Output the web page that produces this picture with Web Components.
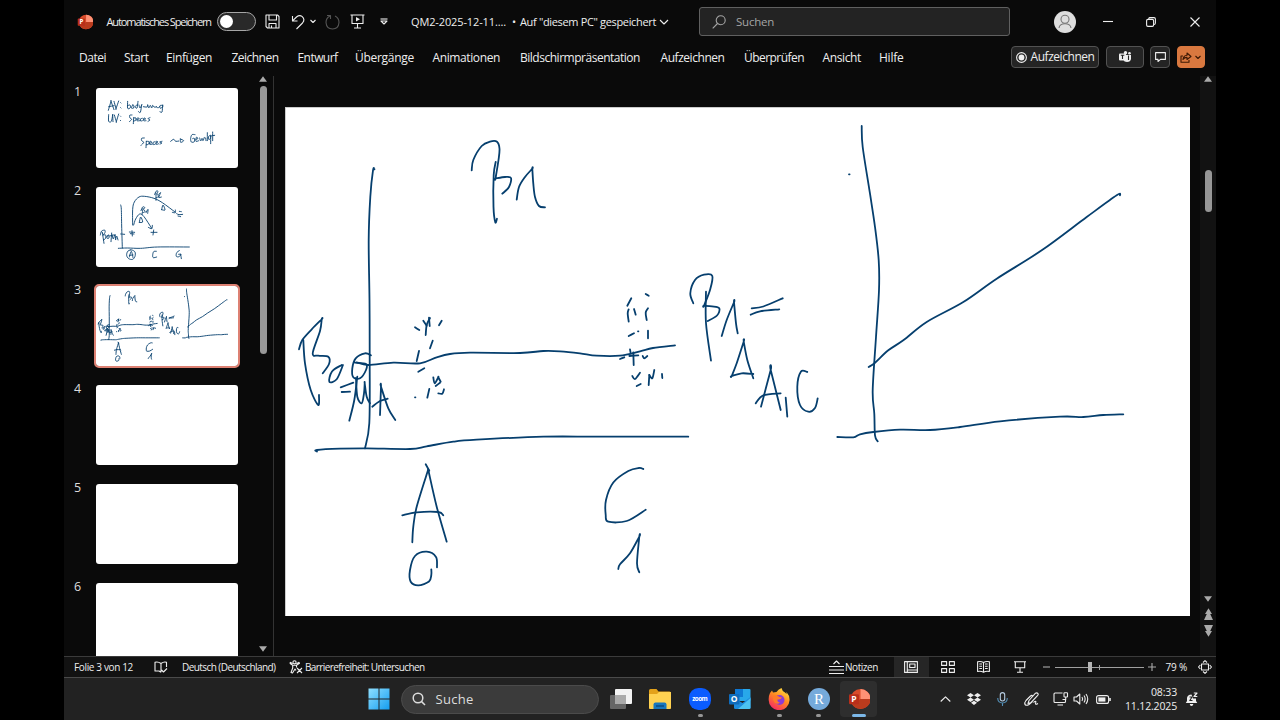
<!DOCTYPE html>
<html lang="de">
<head>
<meta charset="utf-8">
<title>QM2-2025-12-11</title>
<style>
  html, body { margin: 0; height: 100%; background: #000; overflow: hidden; }
  body {
    display: flex;
    justify-content: center;
    font-family: "Open Sans", "Noto Sans", sans-serif;
    color: #eee;
  }
</style>
</head>
<body>
<desktop-screen>
  <title-bar slot="window"></title-bar>
  <ribbon-tabs slot="window"></ribbon-tabs>
  <work-area slot="window"></work-area>
  <status-bar slot="window"></status-bar>
  <task-bar slot="taskbar"></task-bar>
</desktop-screen>

<script>
function define(name, html, setup) {
  const template = document.createElement('template');
  template.innerHTML = html.trim();
  customElements.define(name, class extends HTMLElement {
    constructor() {
      super();
      this.attachShadow({ mode: 'open' });
    }
    connectedCallback() {
      if (this.shadowRoot.firstChild) return;
      this.shadowRoot.appendChild(template.content.cloneNode(true));
      if (setup) setup(this, this.shadowRoot);
    }
  });
}

// shared by every horizontal bar: items keep their size, --g is the space before one
const row = `
  :host { display: flex; align-items: center; box-sizing: border-box; flex: none; }
  * { flex: none; }
  fit-text, ui-icon, app-icon, .item { margin-left: var(--g, 0); }
  .item > * { --g: 0px; }
`;

// a label set to a given width with letter-spacing
define('fit-text', `
<style>
  :host { display: block; line-height: 16px; }
  span { display: inline-block; white-space: pre; }
</style><span><slot></slot></span>`, (el, root) => {
  const w = Number(el.getAttribute('w'));
  const span = root.querySelector('span');
  const natural = span.getBoundingClientRect().width;
  span.style.letterSpacing = ((w - natural) / el.textContent.length).toFixed(3) + 'px';
  el.style.width = w + 'px';
});

const icons = {
  save: [15, 15, '<path d="M1 1H12.5L14 2.5V14H2.5L1 12.5ZM4 1V6H11.500V1M4 14V9.500H11V14M6.500 14V11.500"/>'],
  undo: [15, 16, '<path d="M1.500 2V7H6.500M1.800 6.700L5.500 3Q8.500 .7 11 2.400Q14.500 5.500 11.500 9L5.500 15"/>'],
  chev: [8, 5, '<path d="M1.500 1L4 3.500L6.500 1"/>'],
  redo: [15, 16, '<path d="M2 1.500H5.500V5M5 2Q1 4 1 8.500Q1.500 15 7.500 15Q13.500 15 14 8.500Q14 4 10 2"/>'],
  show: [15, 15, '<path d="M.5 1H14.500M2 1V9.500H13V1M7.500 9.500V14M4 14H11"/><path d="M6 3L10 5.200L6 7.500Z" fill="currentColor" stroke="none"/>'],
  more: [8, 7, '<path d="M.5 1H7.500"/><path d="M1 3H7L4 6Z"/>'],
  chevBig: [10, 6, '<path d="M1 1L5 5L9 1"/>'],
  lens: [14, 14, '<circle cx="8.700" cy="5.300" r="4.500"/><path d="M5.500 8.500L.7 13.300"/>'],
  user: [24, 24, '<circle cx="12" cy="12" r="11" fill="#dedede" stroke="none"/><g stroke="#777"><circle cx="12" cy="9.200" r="4"/><path d="M6 18Q6.500 13.800 12 13.800Q17.500 13.800 18 18"/></g>'],
  min: [10, 10, '<path d="M0 4.500H10"/>'],
  restore: [10, 10, '<rect x=".6" y="2.400" width="7" height="7" rx="1.300"/><path d="M2.800 2V1.500Q3 .6 4 .6H8Q9.400 .7 9.400 2V6Q9.300 7.400 8 7.500"/>'],
  close: [10, 10, '<path d="M.5 .5L9.500 9.500M9.500 .5L.5 9.500"/>'],
  record: [11, 11, '<circle cx="5.500" cy="5.500" r="4.900"/><circle cx="5.500" cy="5.500" r="2.900" fill="currentColor" stroke="none"/>'],
  teams: [13, 12, '<g fill="currentColor" stroke="none"><circle cx="6.500" cy="1.700" r="1.700"/><circle cx="10.500" cy="2.300" r="1.300"/><path d="M5 4H12V8Q11.500 11 8 11Q5 10.800 4.500 9Z"/><rect x="0" y="2.500" width="7" height="7" rx="1"/></g><path d="M1.800 4.300H5.300M3.500 4.300V8M9.500 4.500V9" stroke="#222"/>'],
  comment: [11, 10, '<path d="M.6 .6H10.400V7.400H5.500L3 9.500V7.400H.6Z"/>'],
  share: [12, 11, '<path d="M3 4H1V10.300H9V8M3 7.500Q3.500 3.500 7 3.300V1L11 4.500L7 7.500V5.400Q4.500 5.300 3 7.500Z"/>'],
  up: [8, 6, '<path d="M4 .3L8 5.700H0Z" fill="currentColor" stroke="none"/>'],
  down: [8, 6, '<path d="M4 5.700L8 .3H0Z" fill="currentColor" stroke="none"/>'],
  up2: [9, 13, '<path d="M4.500 .3L8 6H6.200L9 12H0L2.800 6H1Z" fill="currentColor" stroke="none"/>'],
  down2: [9, 13, '<path d="M4.500 12.700L8 7H6.200L9 1H0L2.800 7H1Z" fill="currentColor" stroke="none"/>'],
  proof: [14, 12, '<path d="M7 2.500Q4 .3 1 1.300V10H5L7 11.300M7 2.500Q10 .3 12.500 1.300V6M7 2.500V11.300M7.500 9L9.500 11L13 7.500"/>'],
  access: [14, 14, '<circle cx="5.500" cy="2.300" r="1.600"/><path d="M.8 3.200L3.700 5.200V8L2 12.500L3.500 13L6 9L7 10.500M3.700 5.200H7.500L10.500 3.200L9.800 2.400L7.300 3.700M.8 3.200L1.600 2.400L3.700 3.700M7.500 5.200V7.500M8 8L13 13M13 8L8 13"/>'],
  notes: [15, 15, '<path d="M4.500 4L7.500 1L10.500 4M0 6.500H15M0 10H15M0 13.500H15"/>'],
  normal: [14, 12, '<path d="M.6 .6H13.400V11.400H.6ZM3.300 .6V11.400M5.700 3H11V6.500H5.700ZM3.300 9H13.400"/>'],
  grid: [14, 12, '<path d="M.6 .6H5.600V4.400H.6ZM8.400 .6H13.400V4.400H8.400ZM.6 7.600H5.600V11.400H.6ZM8.400 7.600H13.400V11.400H8.400Z"/>'],
  reading: [13, 12, '<path d="M6.500 1.500Q4 0 .6 .8V10.500Q4 9.800 6.500 11.200Q9 9.800 12.400 10.500V.8Q9 0 6.500 1.500V11.200M2.300 3H5M2.300 5.200H5M2.300 7.500H5M8 3H10.700M8 5.200H10.700M8 7.500H10.700"/>'],
  slides: [12, 12, '<path d="M0 .8H12M1.300 .8V6.800H10.700V.8M6 6.800V11.300M3 11.300H9"/>'],
  minus: [7, 8, '<path d="M0 4H7"/>'],
  plus: [8, 8, '<path d="M0 4H8M4 0V8"/>'],
  fit: [14, 14, '<rect x="3.500" y="4" width="7" height="6"/><path d="M5 2.500L7 .6L9 2.500M5 11.500L7 13.400L9 11.500M2.300 5L.5 7L2.300 9M11.700 5L13.500 7L11.700 9"/>'],
  search: [14, 14, '<g stroke-width="1.500"><circle cx="6" cy="6" r="4.800"/><path d="M9.600 9.600L13 13"/></g>'],
  caret: [11, 6, '<path d="M.7 5.500L5.500 .8L10.300 5.500"/>'],
  dropbox: [14, 12, '<path d="M3.500 0L7 2.200L3.500 4.400L0 2.200ZM10.500 0L14 2.200L10.500 4.400L7 2.200ZM3.500 4.600L7 6.800L3.500 9L0 6.800ZM10.500 4.600L14 6.800L10.500 9L7 6.800ZM7 7.800L10 9.800L7 12L4 9.800Z" fill="currentColor" stroke="none"/>'],
  mic: [11, 14, '<rect x="3.300" y=".6" width="4.400" height="8.400" rx="2.200" stroke="#b5cbe0"/><path d="M.8 6V7Q1.300 10.800 5.500 11Q9.700 10.800 10.200 7V6M5.500 11V14" stroke="#5490b8"/>'],
  pen: [15, 14, '<path d="M5 8.500L11.500 1.200Q13 .3 14 1.600Q14.700 2.700 13.500 3.700L7 10.500L4 11.500ZM8.500 4.500Q8.300 2.500 6.500 4L2 8.500Q.3 10.500 1 12.500Q2.500 14 5 12.500L8.500 9.500M9.500 10.500Q12.500 8 11.700 10.500Q10.500 13.500 14 11.500"/>'],
  network: [15, 14, '<path d="M9.500 1H2Q1 1 1 2V9.500Q1 10.500 2 10.500H11.500Q12.500 10.500 12.500 9.500V7M4.500 13H10"/><rect x="11" y=".7" width="3.500" height="4.300" rx=".6"/><path d="M12.700 5V7.500H9.500"/>'],
  sound: [16, 12, '<path d="M1 4H3.500L6.800 1V11L3.500 8H1ZM9 4Q10.300 6 9 8M11 2.500Q13.300 6 11 9.500M13 1Q16.500 6 13 11"/>'],
  battery: [15, 9, '<rect x=".6" y=".6" width="12" height="7.800" rx="2"/><rect x="2.400" y="2.400" width="7" height="4.200" fill="currentColor" stroke="none"/><path d="M14 3V6" stroke-width="1.600"/>'],
  bell: [13, 15, '<path d="M.8 11L2 9V6Q2.500 2.500 6.500 2.500L8 6.500H11V9L12.300 11ZM4.700 12H8.400Q8 14 6.500 14Q5 14 4.700 12Z" fill="currentColor" stroke="none"/><path d="M8.800 1H12L9 4.500H12.300" stroke-width="1.200"/><path d="M4.500 5H7L4.800 8.500H7.500" stroke="#222"/>'],
};

define('ui-icon', `
<style>
  :host { display: block; line-height: 0; }
  svg { display: block; fill: none; stroke: currentColor; stroke-width: 1.100; stroke-linejoin: round; overflow: visible; }
</style>
<svg></svg>`, (el, root) => {
  const [w, h, body] = icons[el.getAttribute('name')];
  const svg = root.querySelector('svg');
  svg.setAttribute('viewBox', `0 0 ${w} ${h}`);
  svg.setAttribute('width', w);
  svg.setAttribute('height', h);
  svg.innerHTML = body;
});

const powerpoint = `
  <circle cx="12.500" cy="11" r="10" fill="#d84c2b"/>
  <path d="M12.500 1A10 10 0 0 1 22.500 11H12.500Z" fill="#ff9275"/>
  <path d="M22.500 11A10 10 0 0 1 4 16L12.500 11Z" fill="#ba3b1d"/>
  <rect x="1" y="6.300" width="10" height="10" rx="1.200" fill="#b92f1a"/>
  <text x="6" y="14.300" font-size="8.500" font-weight="700" text-anchor="middle" fill="#fff">P</text>`;

const apps = {
  powerpoint,
  windows: `
    <defs><linearGradient id="w" x2="1" y2="1"><stop stop-color="#8fe0ff"/><stop offset="1" stop-color="#149df0"/></linearGradient></defs>
    <path d="M.5 .5H10.500V10.500H.5ZM11.500 .5H21.500V10.500H11.500ZM.5 11.500H10.500V21.500H.5ZM11.500 11.500H21.500V21.500H11.500Z" fill="url(#w)"/>`,
  taskview: `
    <rect x="0" y="7" width="16" height="14" rx="1" fill="#666"/>
    <rect x="5" y="1" width="17" height="15" rx="1" fill="#f2f2f2"/>
    <rect x="5" y="7" width="11" height="9" fill="#aaa"/>`,
  explorer: `
    <path d="M0 2.500Q0 1 1.500 1H7.500L9.500 3.500H20.500Q22 3.500 22 5V19.500Q22 21 20.500 21H1.500Q0 21 0 19.500Z" fill="#e3a21a"/>
    <path d="M0 6H8L10 4H22V19.500Q22 21 20.500 21H1.500Q0 21 0 19.500Z" fill="#ffd251"/>
    <path d="M4.500 21V16.500Q4.500 14.500 6.500 14.500H15.500Q17.500 14.500 17.500 16.500V21Z" fill="#1977bd"/>
    <path d="M7 18H15" stroke="#0c4b80" stroke-width="1.500"/>`,
  zoom: `
    <rect x="0" y="0" width="22" height="22" rx="9.500" fill="#0b5cff"/>
    <text x="11" y="13" font-size="6.300" font-weight="700" text-anchor="middle" fill="#fff" textLength="15.500">zoom</text>`,
  outlook: `
    <rect x="6" y="1" width="15.500" height="12" rx="1" fill="#28a8ea"/>
    <rect x="6" y="1" width="8" height="8" fill="#0f78d4"/>
    <path d="M5 10L13.500 15L21.500 9V20Q21.500 21 20 21H6.500Q5 21 5 20Z" fill="#1d8bdd"/>
    <path d="M21.500 10L9 21H20Q21.500 21 21.500 19.500Z" fill="#4cc3f2"/>
    <rect x="0" y="6" width="10.500" height="10.500" rx="1" fill="#0f6cbd"/>
    <text x="5.200" y="14.300" font-size="8.500" font-weight="700" text-anchor="middle" fill="#fff">O</text>`,
  firefox: `
    <defs><linearGradient id="f" x1=".8" y1="0" x2=".2" y2="1"><stop stop-color="#ffe544"/><stop offset=".45" stop-color="#ff8a20"/><stop offset="1" stop-color="#f5226a"/></linearGradient></defs>
    <path d="M2 5L4 2.500L5 4.500L8.500 4Q10 1.500 13.500 0Q14 3 17 4.500L18.500 6L18.500 4Q22 8 21.500 12.500A10.300 9.800 0 0 1 .7 12Q.5 8 2 5Z" fill="url(#f)"/>
    <circle cx="11.500" cy="12" r="5" fill="#8b3bd6"/>
    <path d="M5 8Q9 6.500 11.500 9L14 9.500Q12.500 12 9.500 11.500Q9 14 12 14.500Q9 17 6.500 14.500Q4.500 12 5 8Z" fill="#ff7b29"/>`,
  rstudio: `
    <circle cx="11" cy="11" r="11" fill="#75aadb"/>
    <text x="11" y="16" font-size="15" text-anchor="middle" fill="#fff" font-family="Liberation Serif, serif">R</text>`,
};

define('app-icon', `
<style>
  :host { display: flex; position: relative; justify-content: center; }
  svg { display: block; }
  i { position: absolute; top: 100%; margin-top: 4px; width: 5px; height: 3px; border-radius: 2px; background: #969696; display: none; }
  :host([running]) i { display: block; }
  :host([active]) i { display: block; width: 14px; background: #7cb8e8; }
</style>
<svg viewBox="0 0 22 22"></svg><i></i>`, (el, root) => {
  const svg = root.querySelector('svg');
  const size = el.getAttribute('size') || 22;
  svg.setAttribute('width', size);
  svg.setAttribute('height', size);
  svg.innerHTML = apps[el.getAttribute('name')];
});

define('toggle-switch', `
<style>
  :host { display: flex; align-items: center; box-sizing: border-box; width: 39px; height: 19px; padding-left: 2px;
    border: 1px solid #a6a6a6; border-radius: 10px; background: #292929; }
  i { width: 13px; height: 13px; border-radius: 50%; background: #fff; }
</style>
<i></i>`);

define('title-bar', `
<style>
  ${row}
  :host { height: 43px; padding-left: 13px; font-size: 11px; }
  .search { display: flex; align-items: center; box-sizing: border-box; width: 311px; height: 29px; padding-left: 12px;
    border: 1px solid #606060; border-radius: 3px; background: #232323; color: #a5a5a5; }
</style>
<app-icon name="powerpoint" size="16"></app-icon>
<fit-text w="104.500" style="--g:13.500px">Automatisches Speichern</fit-text>
<toggle-switch class="item" style="--g:6px"></toggle-switch>
<ui-icon name="save" style="--g:9px"></ui-icon>
<ui-icon name="undo" style="--g:11px"></ui-icon>
<ui-icon name="chev" style="--g:3px"></ui-icon>
<ui-icon name="redo" style="--g:8px;color:#555"></ui-icon>
<ui-icon name="show" style="--g:10px"></ui-icon>
<ui-icon name="more" style="--g:15px"></ui-icon>
<fit-text w="95" style="--g:23px">QM2-2025-12-11....</fit-text>
<fit-text w="4" style="--g:6px">•</fit-text>
<fit-text w="136" style="--g:4px">Auf "diesem PC" gespeichert</fit-text>
<ui-icon name="chevBig" style="--g:3px"></ui-icon>
<div class="item search" style="--g:30px">
  <ui-icon name="lens"></ui-icon>
  <fit-text w="38" style="--g:10px;font-size:11.500px">Suchen</fit-text>
</div>
<ui-icon name="user" style="--g:43px"></ui-icon>
<ui-icon name="min" style="--g:26px"></ui-icon>
<ui-icon name="restore" style="--g:33px"></ui-icon>
<ui-icon name="close" style="--g:34px"></ui-icon>`);

define('ribbon-tabs', `
<style>
  ${row}
  :host { height: 33px; padding: 0 11px 4px 15px; font-size: 12px; }
  nav { display: flex; width: 932px; }
  .button { display: flex; align-items: center; justify-content: center; box-sizing: border-box; height: 22px;
    border: 1px solid #525252; border-radius: 4px; background: #242424; margin-bottom: 1px; }
  .share { background: #d9783f; border-color: #d9783f; color: #3b1804; }
</style>
<nav>
  <fit-text w="27">Datei</fit-text>
  <fit-text w="24.500" style="--g:18px">Start</fit-text>
  <fit-text w="46" style="--g:17.500px">Einfügen</fit-text>
  <fit-text w="47" style="--g:19.500px">Zeichnen</fit-text>
  <fit-text w="40" style="--g:19px">Entwurf</fit-text>
  <fit-text w="59" style="--g:17.500px">Übergänge</fit-text>
  <fit-text w="67.500" style="--g:18.500px">Animationen</fit-text>
  <fit-text w="120" style="--g:20px">Bildschirmpräsentation</fit-text>
  <fit-text w="64" style="--g:20.500px">Aufzeichnen</fit-text>
  <fit-text w="60" style="--g:19.500px">Überprüfen</fit-text>
  <fit-text w="38.500" style="--g:18.500px">Ansicht</fit-text>
  <fit-text w="24.500" style="--g:18px">Hilfe</fit-text>
</nav>
<div class="button item" style="width:88px">
  <ui-icon name="record"></ui-icon>
  <fit-text w="64" style="--g:4px">Aufzeichnen</fit-text>
</div>
<div class="button item" style="--g:7px;width:38px"><ui-icon name="teams"></ui-icon></div>
<div class="button item" style="--g:6px;width:20px"><ui-icon name="comment"></ui-icon></div>
<div class="button item share" style="--g:7px;width:28px">
  <ui-icon name="share"></ui-icon>
  <ui-icon name="chev" style="--g:2px"></ui-icon>
</div>`);

// Strokes: one per line, points as "x,y x,y ...", a repeated point is a sharp corner
const drawings = {
  lecture: { box: '285 107 905 509', strokes: `
    471.700,170.300 473.300,160 481.700,146 490,141.600 497,141.700 499.500,148.700 498.500,160 495.500,178.500 495.500,178.500 505,177 511,178 509,187 502.300,193.700
    495.700,162 493.700,175 493.500,207 495.300,222.300 497,218.700
    516.700,199.700 519,187 525,177 532.300,168.700 532.300,168.700 533.300,183.700 535,197 539,206 545,207.300
    374.500,169.300 373,170.300 370.300,197 368.700,240 369.500,300 369.700,360 369.300,423.300 365,448.300
    317,451.500 317,450 340,448.700 366.700,448.300 410,449 426.700,446.300 453.300,441.700 476.700,439.700 543.300,436.700 600,436.700 688.300,436.700
    356.700,362.300 368.300,365 393.300,362.700 420,363.300 436.700,357.300 450,354 470,352.700 520,353 543.300,351 560,351.300 580,353.300 596.700,355.700 620,355.700 640,351.300 653,348 675,345.300
    371,355.300 365,353.300 355.700,358.300 352.300,368.300 353.300,377.300 360,378.300 366,370 366,364 355,362.700
    299,349.300 302.300,340 311.700,329.300 321.700,319.300 321.700,319.300 320,331 312.700,353.300 318.300,355.700 328.300,356.700 329,364 322.700,373.300
    303.300,340 305,363.300 310.700,390 318.300,405 319,395
    341.700,365 332,371.500 329.300,381.700 336.700,379.300 343,365
    340.700,387.300 353.300,382.700
    341.700,392 350,391.700
    357.300,376.700 354.300,400 349.300,420.700
    356,378 357.300,396.700 361.700,403.300 364,393.300 364.700,383.300 364.700,383.300 366.700,396.700 370,403.300
    372.300,406.700 380,401 387.700,398.700
    380,415 381,386.700 381,386.700 388.300,408.300 395.300,420
    415,327.300 419.300,330
    423.300,320.700 426.700,325.700
    429,317.700 429.700,326
    430,318 426.700,325 425.700,335
    441.700,320.700 439,325.300
    432.700,340.700 430,348.300
    419,351 416.700,361
    418.300,371.700 424.300,368.300
    433.300,377.300 434.700,383.300 438.300,377.300 438.300,377.300 440.700,381.700
    435.700,386 440,382.700
    429.300,389 427.300,397.700
    438.300,393.300 442.300,393.700 444,389.300
    415,397.300 415.400,397.300
    425.700,464.300 429.300,470.700
    428.300,469.300 416.700,506.700 413.300,526.700 412.300,542.300
    428.300,470 436.700,506.700 446.700,541.700
    402.300,515.300 416.700,512.300 438.300,512 443.300,515.300
    437,567.300 436,557 426.700,551.700 415,556 410,570 410.700,581.700 418.300,585.300 429,581.500 431.300,575 431.300,569.300
    643.300,469 639,468 628.300,471 613.300,482.500 606,500 605.700,515 608.300,521.700 626.700,521 645.700,509.700
    618.300,569 620,564.300 630,553.300 639.300,536.700 639.300,536.700 637,563.300 639.300,572.300
    693.300,303.300 690.300,293.300 695,280 704,274.700 712.300,276 710,290 704,305.700 704,305.700 712,306.300 719.300,308.300 717,315.500 707.700,321
    706,291.700 706,323.300 711,360.700
    721.700,336 726.700,320 734,302.300 734,302.300 736,323.300 737.700,333.300
    751.700,308.300 763.300,306.500 782.700,298.300
    750.700,314.700 760,311.300 779.300,309.300
    753.300,374 741.700,373.300 731.700,376 731.700,376 736.700,363.300 743.700,341.700 743.700,341.700 747.300,360 753.300,378.300
    761,406.700 770.700,370 770.700,370 780.700,410
    755.700,403.300 763.300,395.300 780.700,393.300
    785.700,397.700 787.300,416.700
    807.300,372 801,371.500 797.300,386.700 800,405 808.300,411.700 815,408 817.700,398.300
    631.300,298.300 627.300,305.700
    645.700,294 648.700,295.700
    628.700,309.300 627.700,313.300 628.700,321.700
    634,309 635.700,314.700
    648,308.300 645.700,312.700 646.700,320
    628.700,336 634,333.300
    638,331.300 638.400,331.300
    648,330.700 648,338.300
    630,349.300 630.700,353.300
    620,359 624.300,357.300
    633.300,352.300 633.700,365
    629.300,356 638.300,355.300
    642.700,356 644.300,358.300 647.300,356
    632.300,376 635,379 640,372.700
    636.700,386 640.700,384
    649.300,375 648.700,385
    654.300,370 652.300,378.300 649.300,375
    662,374 662.300,378
    861.700,126 862.700,147 870,193.700 875,227 878.700,260.300 879,290.300 876,337 872.700,390.300 874.300,413.700 875,435.300 877.700,441.300
    868.700,367 875,362.700 888.300,350.300 903.300,340.300 926.700,322 963.300,302 996.700,278.700 1041.700,250.300 1086.700,217 1116.700,195.300 1120,195.300
    837.300,437 853.300,437.300 860,434.300 873.300,432 900,429.700 930,430 960,427 1000,421.300 1060,416.700 1083.300,417 1103.300,415 1123.300,414.300
    849,174.300 849.600,174.300` },
  variables: { box: '96 36 426 240', strokes: `
    133,103 141,76 141,76 150,101
    134,92 150,89
    150,76 156,98 156,98 164,75
    170,80 171,81
    170,95 171,96
    191,76 191,97 199,95 198,87 191,89
    206,87 202,96 209,96 209,88 206,87
    222,76 219,96 213,92 220,86
    225,87 228,96 233,87 233,87 229,109 223,106
    238,92 249,93 251,86 254,96 259,88 263,96 266,88 270,93 277,93
    277,91 282,96 287,91
    296,88 288,89 289,97 296,92 296,88 296,88 294,108 288,107
    134,116 134,136 142,136 146,117 146,117 147,137
    151,117 157,137 157,137 164,114
    169,120 170,121
    169,133 170,134
    204,117 197,118 198,126 203,130 196,137
    209,125 208,143
    209,126 216,126 214,134 209,134
    219,131 226,128 220,126 219,134 227,134
    235,127 229,129 230,135 235,134
    238,130 245,129 240,126 239,134 246,134
    258,125 252,128 258,132 252,136
    241,186 233,187 233,194 239,199 231,208
    247,196 246,215
    247,196 255,197 253,205 247,206
    257,202 264,199 258,196 257,205 266,204
    273,197 267,200 269,206 274,204
    276,201 282,198 277,196 277,205 284,203
    294,196 287,198 294,201 288,204
    320,196 329,190 335,196 344,195
    349,189 359,194 350,199 349,189
    393,176 384,176 380,187 382,198 391,197 391,187 386,188
    396,190 402,187 397,184 396,196 404,194
    407,186 410,195 414,187 417,194 421,184
    425,186 426,194
    430,170 430,194
    440,178 434,181 434,190 439,188 440,180 440,203
    446,168 446,194
    441,180 452,178` },
  means: { box: '96 333 426 240', strokes: `
    170,387 172,400 173,450 175,516
    163,517 190,516 230,517 280,513 376,513
    206,447 206,400 211,378 225,363 242,361 270,367 295,380 333,408
    325,409 334,410 334,402
    209,447 215,429 227,414 240,422 263,457
    253,454 263,458 265,448
    226,439 230,423 236,438 226,439
    293,401 297,387 303,402 293,401
    272,356 276,346 282,346 279,355 285,361 276,365
    276,351 276,373
    284,355 290,350 284,364 292,363
    231,404 236,393 242,394 239,401 244,406 237,410
    237,397 234,416
    246,410 252,400 251,412
    196,468 212,469
    199,473 210,474
    204,464 205,480
    261,469 279,469
    269,462 267,477
    338,413 345,416 356,415
    342,420 350,422
    346,406 352,407
    109,477 113,465 123,463 122,472 116,477 125,477 124,488 118,492
    115,469 120,502
    128,482 133,477 135,486 128,486 133,477
    136,480 149,477
    143,471 141,497
    144,476 148,489 153,475 155,491
    155,490 158,480 162,492
    170,474 182,475
    199,522 191,526 188,538 194,548 206,550 213,541 213,528 204,522 199,522
    196,543 202,526 207,545
    196,538 207,537
    277,526 269,527 266,538 268,545 278,543
    346,524 338,530 337,541 345,542 351,535 344,535
    350,535 352,548` },
};

// Catmull-Rom spline through the points of a stroke
function smoothPath(points) {
  let d = `M${points[0]}`;
  for (let i = 0; i < points.length - 1; i++) {
    const p0 = points[i - 1] || points[i];
    const p1 = points[i];
    const p2 = points[i + 1];
    const p3 = points[i + 2] || p2;
    const c1 = [p1[0] + (p2[0] - p0[0]) / 6, p1[1] + (p2[1] - p0[1]) / 6];
    const c2 = [p2[0] - (p3[0] - p1[0]) / 6, p2[1] - (p3[1] - p1[1]) / 6];
    d += `C${c1} ${c2} ${p2}`;
  }
  return d;
}

define('ink-drawing', `
<style>
  :host { display: block; }
  svg { display: block; width: 100%; height: 100%; }
  path { fill: none; stroke: #063f6e; stroke-width: var(--pen, 1.800); stroke-linecap: round; stroke-linejoin: round;
    vector-effect: non-scaling-stroke; }
</style>
<svg preserveAspectRatio="none"></svg>`, (el, root) => {
  const drawing = drawings[el.getAttribute('name')];
  const svg = root.querySelector('svg');
  svg.setAttribute('viewBox', drawing.box);
  svg.innerHTML = drawing.strokes.trim().split('\n').map(line => {
    const points = line.trim().split(' ').map(p => p.split(',').map(Number));
    return `<path d="${smoothPath(points)}"/>`;
  }).join('');
});

define('slide-thumb', `
<style>
  :host { display: flex; flex: none; height: 99.100px; font-size: 12.500px; }
  span { width: 22px; line-height: 17px; margin-top: -5px; color: #ddd; }
  div { width: 142px; height: 80px; border-radius: 3px; background: #fff; --pen: .9; overflow: hidden; }
  :host([selected]) div { outline: 2px solid #dd8173; box-shadow: 0 0 0 1px #5d2f28; }
  ::slotted(ink-drawing) { height: 100%; }
</style>
<span></span><div><slot></slot></div>`, (el, root) => {
  root.querySelector('span').textContent = el.getAttribute('number');
});

define('scroll-bar', `
<style>
  :host { display: flex; flex-direction: column; align-items: center; box-sizing: border-box; flex: none; color: #aaa; }
  i { width: 7px; height: var(--size); margin-top: var(--start); border-radius: 4px; background: #989898; }
  .fill { flex: 1; }
</style>
<ui-icon name="up"></ui-icon><i></i><div class="fill"></div><ui-icon name="down"></ui-icon><slot></slot>`);

define('work-area', `
<style>
  :host { display: flex; flex: 1; min-height: 0; box-sizing: border-box; border-bottom: 1px solid #3b3b3b; background: #0a0a0a; }
  .thumbs { box-sizing: border-box; width: 190px; padding: 12px 0 0 10px; overflow: hidden; }
  .left { width: 20px; padding: 0 1px 4px 0; --start: 4px; --size: 268px; border-right: 1px solid #333; }
  .canvas { box-sizing: border-box; flex: 1; padding: 31px 0 0 11px; }
  .slide { width: 905px; height: 509px; background: #fff; box-shadow: inset 1px 1px #ccc; }
  .slide ink-drawing { height: 100%; }
  .right { width: 16px; padding: 0 0 19px; --start: 88px; --size: 42px; background: #121212; }
  .right ui-icon { margin-top: 3px; }
  .right .first { margin-top: 6px; }
</style>
<div class="thumbs">
  <slide-thumb number="1"><ink-drawing name="variables"></ink-drawing></slide-thumb>
  <slide-thumb number="2"><ink-drawing name="means"></ink-drawing></slide-thumb>
  <slide-thumb number="3" selected><ink-drawing name="lecture"></ink-drawing></slide-thumb>
  <slide-thumb number="4"></slide-thumb>
  <slide-thumb number="5"></slide-thumb>
  <slide-thumb number="6"></slide-thumb>
</div>
<scroll-bar class="left"></scroll-bar>
<div class="canvas"><div class="slide"><ink-drawing name="lecture"></ink-drawing></div></div>
<scroll-bar class="right">
  <ui-icon class="first" name="up2"></ui-icon>
  <ui-icon name="down2"></ui-icon>
</scroll-bar>`);

define('zoom-slider', `
<style>
  :host { display: flex; align-items: center; width: 89px; height: 12px; }
  i { height: 1px; background: #a0a0a0; }
  b { width: 4px; height: 10px; background: #b5b5b5; }
  u { width: 1px; height: 5px; background: #a0a0a0; }
</style>
<i style="width:33px"></i><b></b><i style="width:7px"></i><u></u><i style="width:44px"></i>`);

define('status-bar', `
<style>
  ${row}
  :host { height: 21px; padding-left: 10px; font-size: 10px; background: #121212; border-bottom: 1px solid #4a4a4a; }
  .view { display: flex; align-items: center; justify-content: center; width: 35px; height: 20px; background: #262626; }
</style>
<fit-text w="59">Folie 3 von 12</fit-text>
<ui-icon name="proof" style="--g:21px"></ui-icon>
<fit-text w="93.500" style="--g:14px">Deutsch (Deutschland)</fit-text>
<ui-icon name="access" style="--g:13.500px"></ui-icon>
<fit-text w="119.500" style="--g:2px">Barrierefreiheit: Untersuchen</fit-text>
<ui-icon name="notes" style="--g:404px"></ui-icon>
<fit-text w="33" style="--g:1.500px">Notizen</fit-text>
<div class="view item" style="--g:15.500px"><ui-icon name="normal"></ui-icon></div>
<ui-icon name="grid" style="--g:12.500px"></ui-icon>
<ui-icon name="reading" style="--g:22px"></ui-icon>
<ui-icon name="slides" style="--g:23.500px"></ui-icon>
<ui-icon name="minus" style="--g:17px;color:#aaa"></ui-icon>
<zoom-slider class="item" style="--g:5px"></zoom-slider>
<ui-icon name="plus" style="--g:4px;color:#aaa"></ui-icon>
<fit-text w="21.500" style="--g:10px">79 %</fit-text>
<ui-icon name="fit" style="--g:10.500px"></ui-icon>`);

define('task-bar', `
<style>
  ${row}
  :host { height: 42px; padding-left: 303.500px; font-size: 12px; background: #222; }
  .search { display: flex; align-items: center; box-sizing: border-box; width: 198px; height: 29px; padding-left: 10px;
    border: 1px solid #4b4b4b; border-radius: 15px; background: #3b3b3b; color: #ddd; }
  .active { display: flex; align-items: center; justify-content: center; width: 37px; height: 36px; border-radius: 4px; background: #2e2e2e; }
  .clock { display: flex; flex-direction: column; align-items: flex-end; font-size: 10.500px; width: 52px; }
  .clock fit-text { line-height: 14px; }
</style>
<app-icon name="windows"></app-icon>
<div class="search item" style="--g:11.500px">
  <ui-icon name="search"></ui-icon>
  <fit-text w="38" style="--g:9.500px;font-size:13px">Suche</fit-text>
</div>
<app-icon name="taskview" style="--g:11px"></app-icon>
<app-icon name="explorer" style="--g:17px"></app-icon>
<app-icon name="zoom" running style="--g:18px"></app-icon>
<app-icon name="outlook" style="--g:17.500px"></app-icon>
<app-icon name="firefox" running style="--g:17.500px"></app-icon>
<app-icon name="rstudio" running style="--g:17.500px"></app-icon>
<div class="active item" style="--g:10.500px"><app-icon name="powerpoint" active></app-icon></div>
<ui-icon name="caret" style="--g:62.500px"></ui-icon>
<ui-icon name="dropbox" style="--g:16.500px"></ui-icon>
<ui-icon name="mic" style="--g:16px"></ui-icon>
<ui-icon name="pen" style="--g:16px"></ui-icon>
<ui-icon name="network" style="--g:14px"></ui-icon>
<ui-icon name="sound" style="--g:5px"></ui-icon>
<ui-icon name="battery" style="--g:7px"></ui-icon>
<div class="clock item" style="--g:14px">
  <fit-text w="26">08:33</fit-text>
  <fit-text w="52">11.12.2025</fit-text>
</div>
<ui-icon name="bell" style="--g:8px"></ui-icon>`);

define('desktop-screen', `
<style>
  :host { display: flex; flex-direction: column; width: 1152px; height: 720px; background: #0a0a0a; }
  main { display: flex; flex-direction: column; flex: 1; min-height: 0; }
</style>
<main><slot name="window"></slot></main>
<slot name="taskbar"></slot>`);
</script>
</body>
</html>
